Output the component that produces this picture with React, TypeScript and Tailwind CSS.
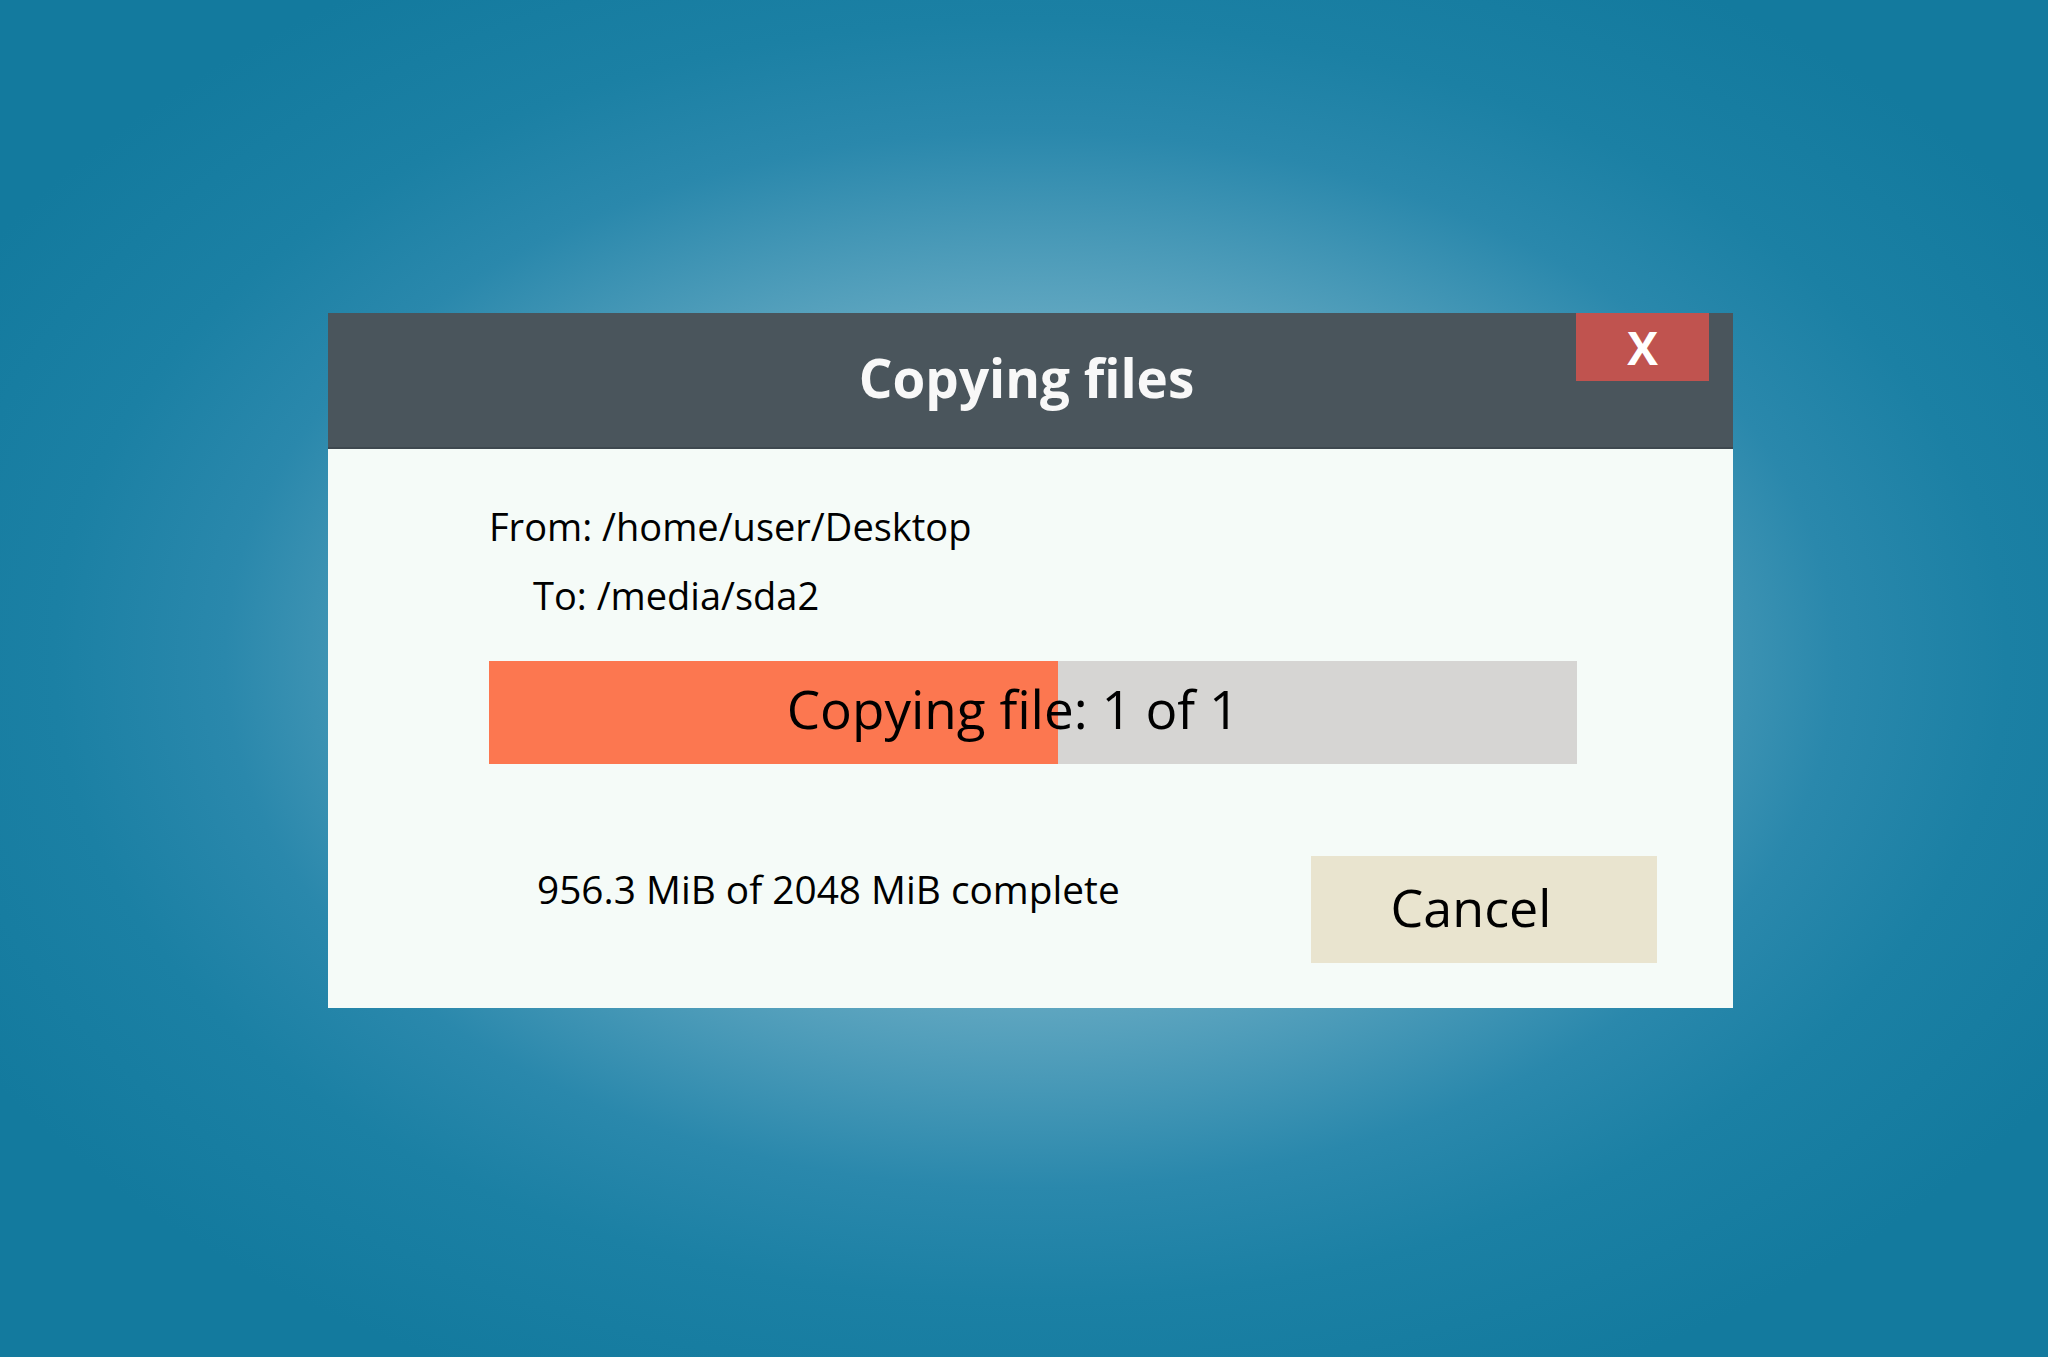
import React from 'react';

const progress = 52.3;

const App: React.FC = () => {
    return (
        <div className="min-h-[1357px] w-full bg-[radial-gradient(ellipse_1220px_800px_at_1030px_660px,#93c6d6_0%,#76b4c9_22%,#5fa6c0_43%,#2a88ac_66%,#1b80a4_80%,#137a9e_100%)] pt-[313px] pl-[328px] font-['Open_Sans',sans-serif]">
            <div className="w-[1405px] bg-[#f5fbf8]">
                <div className="relative flex h-[136px] items-center justify-center border-b-2 border-[#3e484f] bg-[#4a555c]">
                    <h1 className="pr-[8px] pb-[6px] text-[53px] leading-none font-bold text-[#f8f8f8]">Copying files</h1>
                    <button className="absolute top-0 right-[24px] flex h-[68px] w-[133px] items-center justify-center bg-[#c0534f] text-[46px] leading-none font-bold text-white">
                        X
                    </button>
                </div>

                <div className="pt-[58px] pr-[156px] pl-[161px]">
                    <div className="flex flex-col gap-y-[31px] text-[38px] leading-none text-black">
                        <span>From: /home/user/Desktop</span>
                        <span className="pl-[44px]">To: /media/sda2</span>
                    </div>

                    <div className="relative mt-[47px] flex h-[103px] bg-[#d6d5d3]">
                        <div className="h-full bg-[#fc7750]" style={{ width: `${progress}%` }}></div>
                        <div className="absolute inset-0 flex items-center justify-center pr-[40px] pb-[8px] text-[53px] leading-none text-black">
                            Copying file: 1 of 1
                        </div>
                    </div>
                </div>

                <div className="flex items-start justify-between pt-[92px] pr-[76px] pb-[45px] pl-[209px]">
                    <span className="mt-[14px] text-[38.8px] leading-none text-black">956.3 MiB of 2048 MiB complete</span>
                    <button className="flex h-[107px] w-[346px] items-center justify-center bg-[#e9e4cf] pr-[26px] pb-[6px] text-[52px] leading-none text-black">
                        Cancel
                    </button>
                </div>
            </div>
        </div>
    );
};

export default App;
